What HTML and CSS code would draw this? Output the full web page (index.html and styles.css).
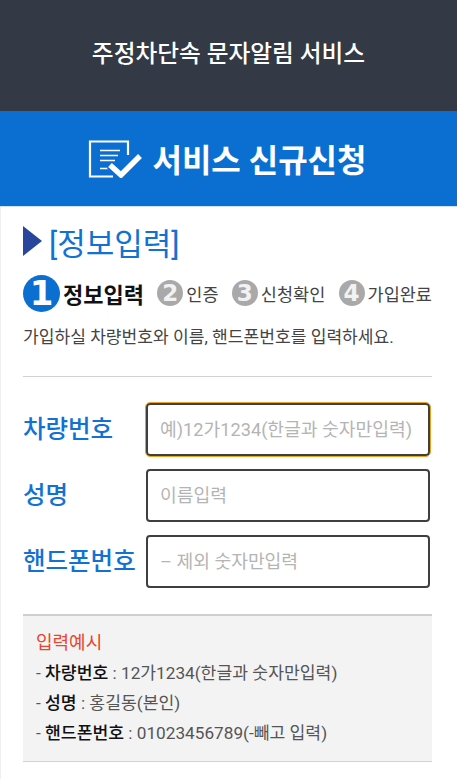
FILE: index.html
```html
<!DOCTYPE html>
<html lang="ko">
<head>
    <meta charset="utf-8">
    <title>서비스 신규신청</title>
    <link rel="stylesheet" href="styles.css">
</head>
<body>
    <div class="top-bar">주정차단속 문자알림 서비스</div>
    <div class="page-title">
        <svg class="title-icon" width="54" height="38" viewBox="0 0 54 38">
            <path d="M40 15V1.500H2V36.500H25" fill="none" stroke="#fff" stroke-width="2.200"/>
            <path d="M12 10.500H32M12 15.500H30M12 20.500H27M12 28.500H22" fill="none" stroke="#fff" stroke-width="1.600"/>
            <path d="M22 25L33 35L52 16" fill="none" stroke="#0b6fd1" stroke-width="9"/>
            <path d="M22 25L33 35L52 16" fill="none" stroke="#fff" stroke-width="5.500"/>
        </svg>
        <span class="page-title-text">서비스 신규신청</span>
    </div>
    <div class="content">
        <div class="section-title">
            <span class="arrow"></span>
            <span>[정보입력]</span>
        </div>
        <div class="steps">
            <div class="step active"><span class="num">1</span><span>정보입력</span></div>
            <div class="step"><span class="num">2</span><span>인증</span></div>
            <div class="step"><span class="num">3</span><span>신청확인</span></div>
            <div class="step"><span class="num">4</span><span>가입완료</span></div>
        </div>
        <p class="intro">가입하실 차량번호와 이름, 핸드폰번호를 입력하세요.</p>
        <div class="form">
            <div class="form-row">
                <label for="carNo">차량번호</label>
                <input id="carNo" class="focused" type="text" placeholder="예)12가1234(한글과 숫자만입력)">
            </div>
            <div class="form-row">
                <label for="name">성명</label>
                <input id="name" type="text" placeholder="이름입력">
            </div>
            <div class="form-row">
                <label for="phone">핸드폰번호</label>
                <input id="phone" type="text" placeholder="– 제외 숫자만입력">
            </div>
        </div>
        <div class="example">
            <div class="example-title">입력예시</div>
            <div class="example-row">- <b>차량번호</b> : 12가1234(한글과 숫자만입력)</div>
            <div class="example-row">- <b>성명</b> : 홍길동(본인)</div>
            <div class="example-row">- <b>핸드폰번호</b> : 01023456789(-빼고 입력)</div>
        </div>
    </div>
</body>
</html>
```
FILE: styles.css
```css
:root {
    --dark-bg: #333a45;
    --blue: #0b6fd1;
    --label-blue: #1272d3;
    --line: #d2d2d2;
    --step-grey: #a9a9a9;
}

body {
    margin: 0;
    background: #fff;
    color: #333;
    font-family: Roboto, "Noto Sans CJK KR", sans-serif;
    overflow: hidden;
}

.top-bar {
    height: 111px;
    line-height: 109px;
    background: var(--dark-bg);
    color: #fff;
    font-size: 23.700px;
    font-weight: 500;
    text-align: center;
}

.page-title {
    display: flex;
    align-items: center;
    justify-content: center;
    gap: 10px;
    height: 95px;
    padding-right: 2px;
    background: var(--blue);
    border-bottom: 1px solid #cfe3f5;
    color: #fff;
    font-size: 32px;
    font-weight: 700;
}

.page-title-text {
    margin-top: -2px;
}

.content {
    padding: 1px 25px 18px 23px;
    box-shadow: inset 1px 0 0 #eee;
}

/* Section heading */
.section-title {
    display: flex;
    align-items: center;
    gap: 7px;
    margin-top: 13px;
    height: 40px;
    color: var(--label-blue);
    font-size: 31px;
}

.arrow {
    width: 0;
    height: 0;
    border-left: 19px solid #27469c;
    border-top: 15px solid transparent;
    border-bottom: 15px solid transparent;
}

/* Steps */
.steps {
    display: flex;
    align-items: center;
    justify-content: space-between;
    margin-top: 9px;
    height: 46px;
}

.step {
    display: flex;
    align-items: center;
    gap: 3px;
    font-size: 17.500px;
    color: #444;
}

.num {
    display: flex;
    align-items: center;
    justify-content: center;
    width: 26px;
    height: 26px;
    border-radius: 50%;
    background: var(--step-grey);
    color: #f2f2f2;
    font-family: "DejaVu Sans", sans-serif;
    font-size: 23px;
    font-weight: 700;
}

.step.active {
    font-size: 22px;
    font-weight: 700;
    color: #111;
}

.step.active .num {
    width: 37px;
    height: 37px;
    background: var(--blue);
    color: #fff;
    font-size: 34px;
}

.intro {
    margin: 9px 0 0;
    padding-bottom: 27px;
    border-bottom: 1px solid var(--line);
    font-size: 17.100px;
    line-height: 24px;
    color: #444;
}

/* Form */
.form {
    margin-top: 26px;
    padding-right: 2px;
}

.form-row {
    display: flex;
    align-items: center;
    justify-content: space-between;
    height: 53px;
    margin-bottom: 13px;
}

.form-row label {
    margin-top: -4px;
    color: var(--label-blue);
    font-size: 24.500px;
    font-weight: 500;
}

.form-row input {
    box-sizing: border-box;
    width: 284px;
    height: 53px;
    padding: 0 12px;
    border: 2px solid #3f3f3f;
    border-radius: 4px;
    background: #fff;
    font-family: inherit;
    font-size: 18.200px;
    outline: none;
}

.form-row input::placeholder {
    color: #b4b4b4;
}

.form-row input.focused {
    outline: 1px solid #eaa21f;
}

/* Example box */
.example {
    margin-top: 26px;
    padding: 12px 13px 13px;
    border-top: 2px solid #cfcfcf;
    border-bottom: 1px solid var(--line);
    background: #f3f3f3;
    font-size: 17.200px;
    color: #555;
}

.example-title {
    height: 30px;
    line-height: 30px;
    color: #e8452c;
    font-size: 18px;
}

.example-row {
    height: 30px;
    line-height: 30px;
}

.example-row b {
    font-weight: 500;
    color: #111;
}
```
